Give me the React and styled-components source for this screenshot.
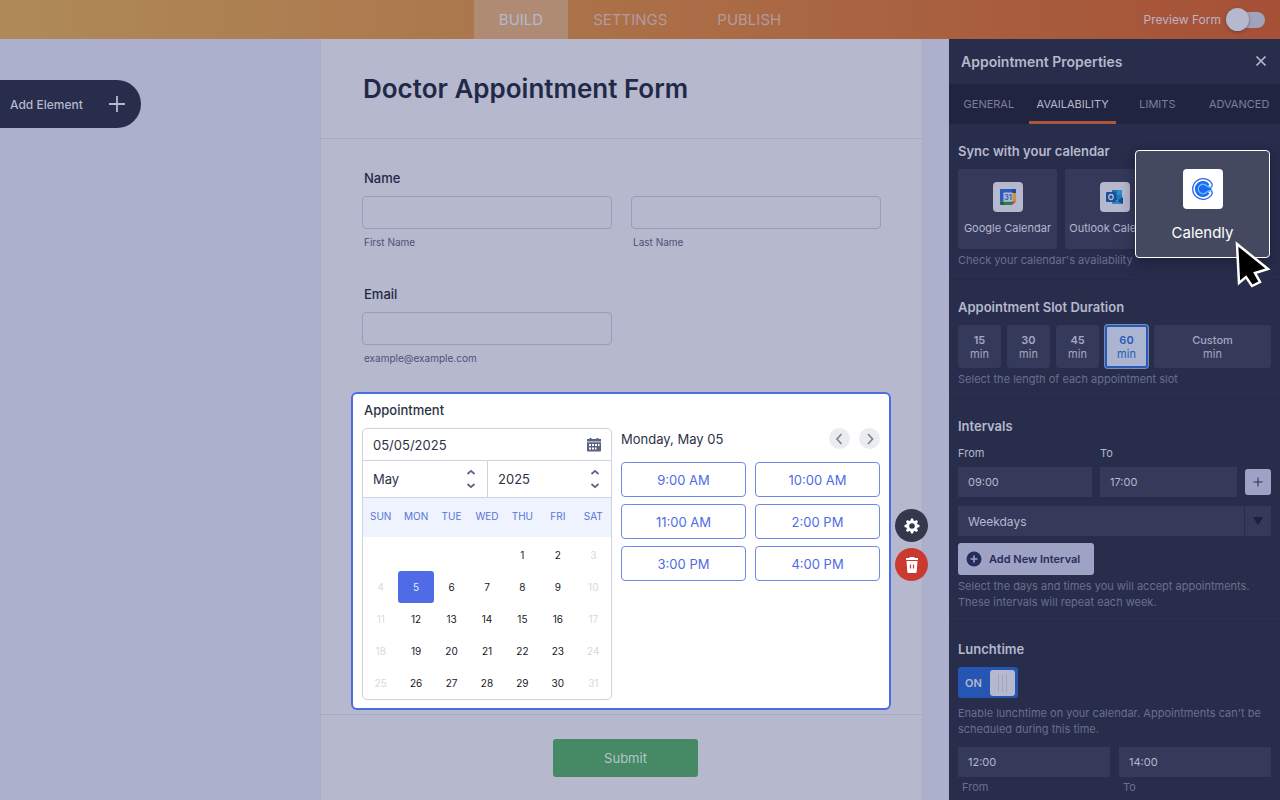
import { useState } from 'react';
import styled, { createGlobalStyle } from 'styled-components';

const WEEKDAYS = ['SUN', 'MON', 'TUE', 'WED', 'THU', 'FRI', 'SAT'];
const WEEKS = [
  [null, null, null, null, 1, 2, 3],
  [4, 5, 6, 7, 8, 9, 10],
  [11, 12, 13, 14, 15, 16, 17],
  [18, 19, 20, 21, 22, 23, 24],
  [25, 26, 27, 28, 29, 30, 31],
];
const TIMES = ['9:00 AM', '10:00 AM', '11:00 AM', '2:00 PM', '3:00 PM', '4:00 PM'];
const DURATIONS = ['15', '30', '45', '60', 'Custom'];

function Header() {
  return (
    <TopBar>
      <MainTabs>
        <MainTab href="#build" $active>
          BUILD
        </MainTab>
        <MainTab href="#settings">SETTINGS</MainTab>
        <MainTab href="#publish">PUBLISH</MainTab>
      </MainTabs>
      <PreviewLabel>
        Preview Form
        <PreviewSwitch type="checkbox" />
      </PreviewLabel>
    </TopBar>
  );
}

function Calendar() {
  const [selected, setSelected] = useState(5);

  return (
    <CalendarBox>
      <DateRow>
        <DateInput aria-label="Date" defaultValue="05/05/2025" />
        <IconButton aria-label="Open calendar">
          <CalendarIcon />
        </IconButton>
      </DateRow>
      <MonthRow>
        <Picker>
          <PickerSelect aria-label="Month">
            <option>May</option>
          </PickerSelect>
          <UpDownIcon />
        </Picker>
        <Picker>
          <PickerSelect aria-label="Year">
            <option>2025</option>
          </PickerSelect>
          <UpDownIcon />
        </Picker>
      </MonthRow>
      <DayTable>
        <thead>
          <tr>
            {WEEKDAYS.map((day) => (
              <th key={day}>{day}</th>
            ))}
          </tr>
        </thead>
        <tbody>
          {WEEKS.map((week, i) => (
            <tr key={i}>
              {week.map((day, j) => (
                <td key={j}>
                  {day && (
                    <DayButton
                      $off={j === 0 || j === 6}
                      $selected={day === selected}
                      onClick={() => setSelected(day)}
                    >
                      {day}
                    </DayButton>
                  )}
                </td>
              ))}
            </tr>
          ))}
        </tbody>
      </DayTable>
    </CalendarBox>
  );
}

function AppointmentField() {
  return (
    <AppointmentCard>
      <CardLabel>Appointment</CardLabel>
      <CardColumns>
        <Calendar />
        <div>
          <SlotsHead>
            <SlotsDate>Monday, May 05</SlotsDate>
            <RoundButton aria-label="Previous day">
              <ArrowIcon d="M10.500 4 6 9l4.500 5" />
            </RoundButton>
            <RoundButton aria-label="Next day">
              <ArrowIcon d="M7 4l4.500 5L7 14" />
            </RoundButton>
          </SlotsHead>
          <SlotGrid>
            {TIMES.map((time) => (
              <SlotButton key={time}>{time}</SlotButton>
            ))}
          </SlotGrid>
        </div>
      </CardColumns>
      <CardActions>
        <ActionButton aria-label="Properties" $color="#35384c">
          <GearIcon />
        </ActionButton>
        <ActionButton aria-label="Delete" $color="#cb3a31">
          <TrashIcon />
        </ActionButton>
      </CardActions>
    </AppointmentCard>
  );
}

function Form() {
  return (
    <FormSheet>
      <FormHeader>
        <FormTitle>Doctor Appointment Form</FormTitle>
      </FormHeader>
      <FormBody>
        <FieldTitle>Name</FieldTitle>
        <FieldGrid>
          <Field>
            <FieldInput id="first-name" />
            <SubLabel htmlFor="first-name">First Name</SubLabel>
          </Field>
          <Field>
            <FieldInput id="last-name" />
            <SubLabel htmlFor="last-name">Last Name</SubLabel>
          </Field>
        </FieldGrid>
        <FieldTitle>Email</FieldTitle>
        <FieldGrid>
          <Field>
            <FieldInput id="email" type="email" />
            <SubLabel htmlFor="email">example@example.com</SubLabel>
          </Field>
        </FieldGrid>
      </FormBody>
      <AppointmentField />
      <FormFooter>
        <SubmitButton>Submit</SubmitButton>
      </FormFooter>
    </FormSheet>
  );
}

function PropertiesPanel() {
  const [duration, setDuration] = useState('60');

  return (
    <Panel>
      <PanelHeader>
        <PanelTitle>Appointment Properties</PanelTitle>
        <CloseButton aria-label="Close">
          <svg width="12" height="12" viewBox="0 0 12 12">
            <path d="M1.500 1.500l9 9M10.500 1.500l-9 9" stroke="#b6b8cd" strokeWidth="1.700" />
          </svg>
        </CloseButton>
      </PanelHeader>
      <PanelTabs>
        <PanelTab>GENERAL</PanelTab>
        <PanelTab $active>AVAILABILITY</PanelTab>
        <PanelTab>LIMITS</PanelTab>
        <PanelTab>ADVANCED</PanelTab>
      </PanelTabs>

      <Section>
        <SectionTitle>Sync with your calendar</SectionTitle>
        <SyncGrid>
          <SyncCard>
            <SyncLogo>
              <GoogleCalendarLogo />
            </SyncLogo>
            Google Calendar
          </SyncCard>
          <SyncCard>
            <SyncLogo>
              <OutlookLogo />
            </SyncLogo>
            Outlook Calendar
          </SyncCard>
          <CalendlyCell>
            <CalendlyCard>
              <SyncLogo $large>
                <CalendlyLogo />
              </SyncLogo>
              Calendly
            </CalendlyCard>
            <Pointer viewBox="0 0 38 50">
              <path
                d="M3 4 5 43l7-6 6 9 8-4-5-9 13-4z"
                fill="#000"
                stroke="#fff"
                strokeWidth="2.500"
              />
            </Pointer>
          </CalendlyCell>
        </SyncGrid>
        <Help>Check your calendar's availability</Help>
      </Section>

      <Section>
        <SectionTitle>Appointment Slot Duration</SectionTitle>
        <DurationGrid>
          {DURATIONS.map((value) => (
            <DurationButton
              key={value}
              $active={value === duration}
              onClick={() => setDuration(value)}
            >
              <DurationValue $muted={value === 'Custom'}>{value}</DurationValue>
              min
            </DurationButton>
          ))}
        </DurationGrid>
        <Help>Select the length of each appointment slot</Help>
      </Section>

      <Section>
        <SectionTitle>Intervals</SectionTitle>
        <IntervalGrid>
          <PanelLabel htmlFor="interval-from">From</PanelLabel>
          <PanelLabel htmlFor="interval-to">To</PanelLabel>
          <span />
          <PanelInput id="interval-from" defaultValue="09:00" />
          <PanelInput id="interval-to" defaultValue="17:00" />
          <PlusButton aria-label="Add time">
            <svg width="12" height="12" viewBox="0 0 12 12">
              <path d="M6 1.500v9M1.500 6h9" stroke="#272d5b" strokeWidth="1" />
            </svg>
          </PlusButton>
        </IntervalGrid>
        <DaysPicker>
          <DaysSelect aria-label="Days">
            <option>Weekdays</option>
          </DaysSelect>
          <DaysArrow>
            <svg width="10" height="8" viewBox="0 0 10 8">
              <path d="M0 0h10L5 8z" fill="#1d2140" />
            </svg>
          </DaysArrow>
        </DaysPicker>
        <AddIntervalButton>
          <svg width="16" height="16" viewBox="0 0 16 16">
            <circle cx="8" cy="8" r="7.500" fill="#272d5b" />
            <path d="M8 4.500v7M4.500 8h7" stroke="#9ea2c4" strokeWidth="1.600" />
          </svg>
          Add New Interval
        </AddIntervalButton>
        <Help>
          Select the days and times you will accept appointments. These intervals will repeat each
          week.
        </Help>
      </Section>

      <Section>
        <SectionTitle>Lunchtime</SectionTitle>
        <LunchSwitch>
          <HiddenCheckbox type="checkbox" aria-label="Lunchtime" defaultChecked />
          ON
          <LunchKnob>
            <svg width="12" height="20" viewBox="0 0 12 20">
              <path d="M1.500 1v18M5.500 1v18M9.500 1v18" stroke="#a2a5be" strokeWidth="1" />
            </svg>
          </LunchKnob>
        </LunchSwitch>
        <LunchHelp>
          Enable lunchtime on your calendar. Appointments can't be scheduled during this time.
        </LunchHelp>
        <LunchGrid>
          <PanelInput id="lunch-from" defaultValue="12:00" />
          <PanelInput id="lunch-to" defaultValue="14:00" />
          <LunchLabel htmlFor="lunch-from">From</LunchLabel>
          <LunchLabel htmlFor="lunch-to">To</LunchLabel>
        </LunchGrid>
      </Section>
    </Panel>
  );
}

export default function App() {
  return (
    <>
      <GlobalStyle />
      <Page>
        <Header />
        <Main>
          <Workspace>
            <AddElementButton>
              Add Element
              <svg width="18" height="18" viewBox="0 0 18 18">
                <path d="M9 1v16M1 9h16" stroke="#b6b8cd" strokeWidth="1.800" />
              </svg>
            </AddElementButton>
            <Form />
          </Workspace>
          <PropertiesPanel />
        </Main>
      </Page>
    </>
  );
}

/* icons */

function CalendarIcon() {
  return (
    <svg width="14" height="14" viewBox="0 0 14 14">
      <path d="M2.500 0h2v1h5V0h2v1H14v2.500H0V1h2.500z" fill="#5b6180" />
      <path d="M0 4.200h14V12.500a1 1 0 0 1-1 1H1a1 1 0 0 1-1-1z" fill="#5b6180" />
      <path
        d="M2 6h2v2H2zM5 6h2v2H5zM8 6h2v2H8zM11 6h1.500v2H11zM2 9.500h2v2H2zM5 9.500h2v2H5zM8 9.500h1.500v2H8z"
        fill="#fff"
      />
    </svg>
  );
}

function UpDownIcon() {
  return (
    <svg width="10" height="20" viewBox="0 0 10 20">
      <path
        d="M1.500 5 5 1.800 8.500 5M1.500 15 5 18.200 8.500 15"
        fill="none"
        stroke="#5b6180"
        strokeWidth="1.700"
      />
    </svg>
  );
}

function ArrowIcon({ d }) {
  return (
    <svg width="17" height="18" viewBox="0 0 17 18">
      <path d={d} fill="none" stroke="#828699" strokeWidth="1.800" />
    </svg>
  );
}

function GearIcon() {
  return (
    <svg width="16" height="16" viewBox="0 0 16 16">
      <circle cx="8" cy="8" r="4.300" fill="none" stroke="#fff" strokeWidth="3" />
      {[0, 45, 90, 135, 180, 225, 270, 315].map((angle) => (
        <path
          key={angle}
          d="M6.300 3 7 .5h2l.7 2.500z"
          fill="#fff"
          transform={`rotate(${angle} 8 8)`}
        />
      ))}
    </svg>
  );
}

function TrashIcon() {
  return (
    <svg width="14" height="16" viewBox="0 0 14 16">
      <path d="M4.500 0h5v1H13v2H1V1h3.500z" fill="#fff" />
      <path d="M1.500 4h11l-.8 10.500a1.500 1.500 0 0 1-1.500 1.500H3.800a1.500 1.500 0 0 1-1.500-1.500z" fill="#fff" />
      <path d="M5.500 7.500v4M8.500 7.500v4" stroke="#cb3a31" strokeWidth="1.200" />
    </svg>
  );
}

function GoogleCalendarLogo() {
  return (
    <svg width="18" height="18" viewBox="0 0 18 18">
      <path d="M1.500 1h11.500v4H5v8.500H1V1.500z" fill="#2a5cc0" />
      <path d="M13 1h3a1 1 0 0 1 1 1v3h-4z" fill="#1f49a0" />
      <path d="M13 5h4v8.500h-4z" fill="#c2973f" />
      <path d="M5 13.500h8V17H5z" fill="#2c7f50" />
      <path d="M1 13.500h4V17H2a1 1 0 0 1-1-1z" fill="#1d6540" />
      <path d="M13 13.500h4L13 17z" fill="#b23e3d" />
      <path d="M4.500 4.500h9v9h-9z" fill="#b6b8cd" />
      <text x="9" y="11.500" textAnchor="middle" fontSize="7" fontWeight="700" fill="#2a5cc0">
        31
      </text>
    </svg>
  );
}

function OutlookLogo() {
  return (
    <svg width="18" height="18" viewBox="0 0 18 18">
      <path d="M6 2h5v5H6z" fill="#1c6fb4" />
      <path d="M11 2h5v5h-5z" fill="#2a8fc6" />
      <path d="M6 7h5v5H6z" fill="#175ea6" />
      <path d="M11 7h5v5h-5z" fill="#2377bd" />
      <path d="M6 10l6 3 5-3v5a1 1 0 0 1-1 1H7a1 1 0 0 1-1-1z" fill="#2b86c4" />
      <path d="M11 13l6-4v7z" fill="#1b4c8c" />
      <rect y="4" width="10" height="10" rx="1" fill="#17509b" />
      <ellipse cx="5" cy="9" rx="2.200" ry="2.500" fill="none" stroke="#b6b8cd" strokeWidth="1.300" />
    </svg>
  );
}

function CalendlyLogo() {
  return (
    <svg width="24" height="24" viewBox="0 0 24 24">
      <path
        d="M21.300 7.500A10.300 10.300 0 1 0 21.300 16.500M21.300 7.500q-.4 3-2 4.500 1.600 1.500 2 4.500"
        fill="none"
        stroke="#2466f0"
        strokeWidth="1.300"
      />
      <path
        d="M18.500 7.500A8 8 0 1 0 18.500 16.500L17 15q1.500-1 3-1.500-1.500-1.500 0-3-1.500-.5-3-1.500z"
        fill="#2466f0"
      />
      <path
        d="M20.500 10.200q-3 .3-4.700-1.200A4.800 4.800 0 1 0 15.800 15q1.700-1.500 4.700-1.200"
        fill="none"
        stroke="#4fc8f5"
        strokeWidth="1.400"
      />
    </svg>
  );
}

/* styles */

const GlobalStyle = createGlobalStyle`
  * {
    box-sizing: border-box;
  }

  body {
    margin: 0;
    background: #adb0cc;
    font-family: Inter, 'Liberation Sans', sans-serif;
    color: #222948;
  }

  button,
  input,
  select {
    margin: 0;
    padding: 0;
    border: 0;
    border-radius: 0;
    background: none;
    color: inherit;
    font: inherit;
    outline: none;
  }

  h1,
  h2,
  h3,
  p {
    margin: 0;
  }

  svg {
    display: block;
    flex-shrink: 0;
  }
`;

const Page = styled.div`
  min-height: 100vh;
  display: flex;
  flex-direction: column;
`;

const TopBar = styled.header`
  height: 39px;
  display: grid;
  grid-template-columns: 1fr auto 1fr;
  background: linear-gradient(90deg, #af8a58, #ac784d 35%, #a96441 68%, #a65037);
`;

const MainTabs = styled.nav`
  grid-column: 2;
  display: flex;
`;

const MainTab = styled.a`
  display: flex;
  align-items: center;
  padding: 0 25px;
  font-size: 15px;
  text-decoration: none;
  color: ${({ $active }) => ($active ? '#b6b8cd' : '#b39a9e')};
  background: ${({ $active }) => ($active ? '#af8b74' : 'transparent')};
`;

const PreviewLabel = styled.label`
  display: flex;
  align-items: center;
  justify-content: flex-end;
  gap: 5px;
  padding-right: 15px;
  font-size: 12px;
  color: #b9b4c6;
`;

const PreviewSwitch = styled.input`
  appearance: none;
  width: 39px;
  height: 16px;
  border-radius: 8px;
  background: #9fa3bb;
  display: flex;
  align-items: center;

  &::before {
    content: '';
    width: 23px;
    height: 23px;
    flex-shrink: 0;
    border-radius: 50%;
    background: #b6b8cd;
    box-shadow: 0 1px 3px rgba(40, 40, 70, 0.5);
  }
`;

const Main = styled.main`
  flex: 1;
  display: flex;
`;

const Workspace = styled.div`
  flex: 1;
  display: flex;
  align-items: stretch;
  justify-content: space-between;
  padding-right: 26px;
`;

const AddElementButton = styled.button`
  width: 141px;
  height: 48px;
  margin-top: 41px;
  padding: 0 15px 0 10px;
  display: flex;
  align-items: center;
  justify-content: space-between;
  border-radius: 0 24px 24px 0;
  background: #272d4b;
  color: #b6b8cd;
  font-size: 12px;
  font-weight: 500;
`;

const FormSheet = styled.section`
  width: 603px;
  background: #b6b8cd;
  border: 1px solid #a9acc5;
  border-width: 0 1px;
`;

const FormHeader = styled.div`
  padding: 32px 42px;
  border-bottom: 1px solid #a6a9c1;
`;

const FormTitle = styled.h1`
  font-size: 26px;
  line-height: 35px;
  font-weight: 600;
`;

const FormBody = styled.div`
  padding: 31px 41px 26px;
`;

const FieldTitle = styled.h2`
  padding-left: 2px;
  margin-bottom: 10px;
  font-size: 13px;
  line-height: 16px;
  font-weight: 500;
`;

const FieldGrid = styled.div`
  display: grid;
  grid-template-columns: 1fr 1fr;
  gap: 19px;

  & + ${FieldTitle} {
    margin-top: 36px;
  }
`;

const Field = styled.div`
  display: flex;
  flex-direction: column;
  gap: 6px;
`;

const FieldInput = styled.input`
  width: 100%;
  height: 33px;
  padding: 0 10px;
  border: 1px solid #999db8;
  border-radius: 4px;
  font-size: 13px;
`;

const SubLabel = styled.label`
  padding-left: 2px;
  font-size: 10px;
  line-height: 15px;
  color: #4b5278;
`;

const AppointmentCard = styled.div`
  position: relative;
  margin: 0 31px 4px 30px;
  padding: 8px 9px;
  border: 2px solid #4a6de5;
  border-radius: 6px;
  background: #fff;
  color: #2c3345;
`;

const CardLabel = styled.h2`
  padding-left: 2px;
  margin-bottom: 10px;
  font-size: 13px;
  line-height: 16px;
  font-weight: 500;
`;

const CardColumns = styled.div`
  display: grid;
  grid-template-columns: 250px 1fr;
  gap: 9px;
`;

const CalendarBox = styled.div`
  border: 1px solid #cfd3e0;
  border-radius: 5px;
  overflow: hidden;
`;

const DateRow = styled.div`
  height: 32px;
  padding: 0 10px;
  display: flex;
  align-items: center;
  border-bottom: 1px solid #cfd3e0;
`;

const DateInput = styled.input`
  flex: 1;
  min-width: 0;
  font-size: 13px;
`;

const IconButton = styled.button`
  display: flex;
`;

const MonthRow = styled.div`
  height: 37px;
  display: grid;
  grid-template-columns: 1fr 1fr;
  border-bottom: 1px solid #cfd3e0;
`;

const Picker = styled.div`
  display: flex;
  align-items: center;
  padding: 0 11px 0 10px;

  & + & {
    border-left: 1px solid #cfd3e0;
  }
`;

const PickerSelect = styled.select`
  appearance: none;
  flex: 1;
  min-width: 0;
  font-size: 13px;
`;

const DayTable = styled.table`
  width: 100%;
  table-layout: fixed;
  border-collapse: collapse;
  font-size: 10px;

  thead {
    background: #eef3fe;
    color: #5973d8;
  }

  th {
    height: 39px;
    padding: 0 0 3px;
    font-weight: 400;
  }

  td {
    height: 32px;
    padding: 0;
  }

  tbody::before {
    content: '';
    display: block;
    height: 2px;
  }
`;

const DayButton = styled.button`
  display: block;
  width: 100%;
  height: 32px;
  border-radius: 3px;
  background: ${({ $selected }) => ($selected ? '#4f6be6' : 'transparent')};
  color: ${({ $selected, $off }) => {
    if ($selected) return '#e8ecff';
    return $off ? '#d6d9e2' : '#16181f';
  }};
`;

const SlotsHead = styled.div`
  display: flex;
  align-items: center;
  gap: 9px;
  height: 21px;
  margin-bottom: 13px;
`;

const SlotsDate = styled.h3`
  flex: 1;
  font-size: 13px;
  font-weight: 400;
`;

const RoundButton = styled.button`
  width: 21px;
  height: 21px;
  display: flex;
  align-items: center;
  justify-content: center;
  border-radius: 50%;
  background: #ebecf2;
`;

const SlotGrid = styled.div`
  display: grid;
  grid-template-columns: 1fr 1fr;
  gap: 7px 9px;
`;

const SlotButton = styled.button`
  height: 35px;
  border: 1px solid #7088e8;
  border-radius: 4px;
  color: #4f6be6;
  font-size: 13px;
`;

/* floats beside the selected field */
const CardActions = styled.div`
  position: absolute;
  top: 115px;
  left: calc(100% + 6px);
  display: flex;
  flex-direction: column;
  gap: 6px;
`;

const ActionButton = styled.button`
  width: 33px;
  height: 33px;
  display: flex;
  align-items: center;
  justify-content: center;
  border-radius: 50%;
  background: ${({ $color }) => $color};
`;

const FormFooter = styled.div`
  display: flex;
  justify-content: center;
  padding: 24px 0 24px 8px;
  border-top: 1px solid #a6a9c1;
`;

const SubmitButton = styled.button`
  width: 145px;
  height: 38px;
  border-radius: 3px;
  background: #458a64;
  color: #b6c4cd;
  font-size: 13px;
`;

const Panel = styled.aside`
  width: 331px;
  flex-shrink: 0;
  background: #272d4b;
  color: #b6b8cd;
`;

const PanelHeader = styled.div`
  height: 45px;
  padding: 0 13px 1px 12px;
  display: flex;
  align-items: center;
  justify-content: space-between;
`;

const PanelTitle = styled.h2`
  font-size: 14px;
  font-weight: 600;
`;

const CloseButton = styled.button`
  display: flex;
`;

const PanelTabs = styled.nav`
  height: 40px;
  display: grid;
  grid-template-columns: 80fr 88fr 82fr 82fr;
  background: #212441;
`;

const PanelTab = styled.button`
  min-width: 0;
  padding-top: 3px;
  border-bottom: 3px solid ${({ $active }) => ($active ? '#ae563c' : 'transparent')};
  color: ${({ $active }) => ($active ? '#b6b8cd' : '#7b7f9b')};
  font-size: 11px;
`;

const Section = styled.section`
  padding: 19px 9px 11px;

  & + & {
    border-top: 1px solid #242944;
  }
`;

const SectionTitle = styled.h3`
  margin-bottom: 9px;
  font-size: 13px;
  line-height: 17px;
  font-weight: 600;
`;

const Help = styled.p`
  margin-top: 3px;
  font-size: 11px;
  line-height: 16px;
  color: #6a6f8d;
`;

const SyncGrid = styled.div`
  display: grid;
  grid-template-columns: repeat(3, minmax(0, 1fr));
  gap: 8px;
`;

const SyncCard = styled.button`
  height: 80px;
  display: flex;
  flex-direction: column;
  align-items: center;
  gap: 9px;
  padding-top: 13px;
  border-radius: 3px;
  background: #353a5b;
  font-size: 11px;
  white-space: nowrap;
`;

const SyncLogo = styled.span`
  width: ${({ $large }) => ($large ? '40px' : '30px')};
  height: ${({ $large }) => ($large ? '40px' : '30px')};
  flex-shrink: 0;
  display: flex;
  align-items: center;
  justify-content: center;
  border-radius: 4px;
  background: ${({ $large }) => ($large ? '#fff' : '#b6b8cd')};
`;

const CalendlyCell = styled.div`
  position: relative;
`;

/* lifted above the grid while it is being pointed at */
const CalendlyCard = styled.button`
  position: absolute;
  top: -19px;
  right: 1px;
  width: 135px;
  height: 108px;
  display: flex;
  flex-direction: column;
  align-items: center;
  gap: 14px;
  padding-top: 18px;
  border: 1px solid #fff;
  border-radius: 4px;
  background: #454960;
  box-shadow: 0 4px 14px rgba(15, 18, 40, 0.5);
  color: #fff;
  font-size: 15px;
`;

const Pointer = styled.svg`
  position: absolute;
  top: 71px;
  right: -1px;
  width: 38px;
  height: 50px;
`;

const DurationGrid = styled.div`
  display: grid;
  grid-template-columns: repeat(4, 43px) 1fr;
  gap: 6px;
`;

const DurationButton = styled.button`
  height: 43px;
  border-radius: 3px;
  font-size: 11px;
  line-height: 14px;
  background: ${({ $active }) => ($active ? '#abb5d2' : '#353a5b')};
  color: ${({ $active }) => ($active ? '#2a59b8' : '#a4a7c0')};
  border: ${({ $active }) => ($active ? '2px solid #2a59b8' : '0')};
  box-shadow: ${({ $active }) => ($active ? '0 0 0 1px #7b8bb5' : 'none')};
`;

const DurationValue = styled.strong`
  display: block;
  font-weight: ${({ $muted }) => ($muted ? 500 : 600)};
`;

const IntervalGrid = styled.div`
  display: grid;
  grid-template-columns: 134fr 137fr 26px;
  column-gap: 8px;
  align-items: center;
  margin-top: 10px;
`;

const PanelLabel = styled.label`
  margin-bottom: 6px;
  font-size: 11px;
  line-height: 16px;
`;

const PanelInput = styled.input`
  width: 100%;
  min-width: 0;
  height: 30px;
  padding: 0 10px;
  background: #353a5b;
  font-size: 11px;
`;

const PlusButton = styled.button`
  height: 26px;
  display: flex;
  align-items: center;
  justify-content: center;
  border-radius: 3px;
  background: #9ea2c4;
`;

const DaysPicker = styled.div`
  height: 30px;
  margin: 9px 0 7px;
  display: flex;
  gap: 1px;
`;

const DaysSelect = styled.select`
  appearance: none;
  flex: 1;
  padding: 0 10px;
  background: #353a5b;
  font-size: 12px;
`;

const DaysArrow = styled.span`
  width: 26px;
  display: flex;
  align-items: center;
  justify-content: center;
  background: #353a5b;
`;

const AddIntervalButton = styled.button`
  height: 32px;
  padding: 0 14px 0 8px;
  display: flex;
  align-items: center;
  gap: 7px;
  border-radius: 3px;
  background: #9ea2c4;
  color: #272d5b;
  font-size: 11px;
  font-weight: 600;
`;

const LunchSwitch = styled.label`
  position: relative;
  width: 60px;
  height: 31px;
  padding: 0 3px 0 7px;
  display: flex;
  align-items: center;
  justify-content: space-between;
  border-radius: 3px;
  background: #2556b4;
  font-size: 11px;
  font-weight: 600;
`;

const HiddenCheckbox = styled.input`
  position: absolute;
  inset: 0;
  opacity: 0;
`;

const LunchKnob = styled.span`
  width: 25px;
  height: 26px;
  display: flex;
  align-items: center;
  justify-content: center;
  border-radius: 3px;
  background: #b6b8cd;
`;

const LunchHelp = styled(Help)`
  margin: 7px 0 10px;
`;

const LunchGrid = styled.div`
  display: grid;
  grid-template-columns: 1fr 1fr;
  gap: 2px 9px;
`;

const LunchLabel = styled.label`
  padding-left: 4px;
  font-size: 11px;
  line-height: 16px;
  color: #6a6f8d;
`;
